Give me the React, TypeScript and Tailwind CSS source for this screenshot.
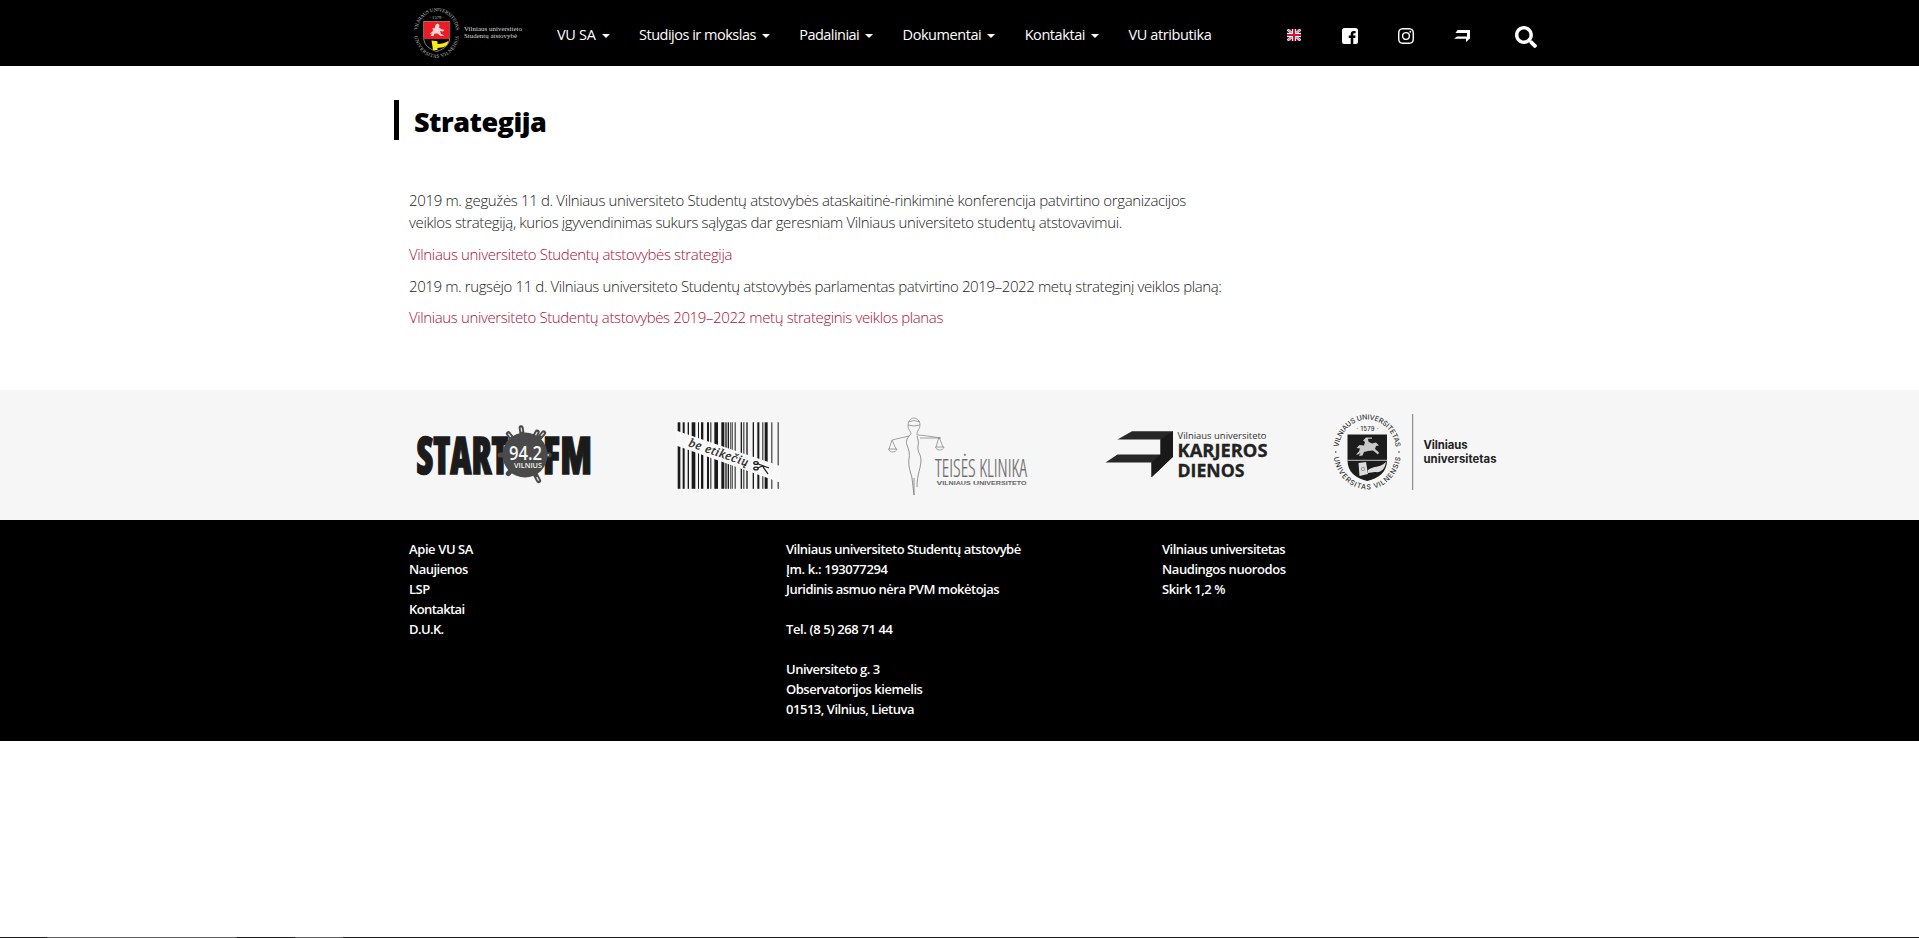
import { BsInstagram } from "react-icons/bs";
import { FaSearch } from "react-icons/fa";

const nav = [
  { label: "VU SA", menu: true, tracking: "tracking-[-0.3px]" },
  { label: "Studijos ir mokslas", menu: true, tracking: "tracking-[-0.49px]" },
  { label: "Padaliniai", menu: true, tracking: "tracking-[-0.55px]" },
  { label: "Dokumentai", menu: true, tracking: "tracking-[-0.44px]" },
  { label: "Kontaktai", menu: true, tracking: "tracking-[-0.42px]" },
  { label: "VU atributika", menu: false, tracking: "tracking-[-0.4px]" },
];

function HeaderLogo() {
  return (
    <svg className="ml-[409px] h-[66px] w-[117px] shrink-0" viewBox="409 0 117 66">
      <defs>
        <path id="hTop" d="M417.2 32.700 A19.5 21.400 0 1 1 456.2 32.700" />
        <path id="hBot" d="M414.2 32.700 A22.5 25 0 0 0 459.2 32.700" />
      </defs>
      <g fill="#c8c8c8" fontFamily="Liberation Serif, serif" fontSize="5">
        <text textAnchor="middle" textLength="59"><textPath href="#hTop" startOffset="50%">VILNIAUS UNIVERSITETAS</textPath></text>
        <text textAnchor="middle" textLength="67"><textPath href="#hBot" startOffset="50%">UNIVERSITAS VILNENSIS</textPath></text>
        <text x="436.7" y="18.8" textAnchor="middle" fontSize="4.6">· 1579 ·</text>
      </g>
      <path d="M423.7 21.500h26v16c0 7-5 11.500-13 14c-8-2.500-13-7-13-14z" fill="#000" stroke="#aaa" strokeWidth=".8" />
      <path d="M424 21.800h25.400v17.200h-25.400z" fill="#ec1c24" />
      <path d="M429.500 34l3.500-3-.5-3 2 .5 1-3.500 2-1.500 2 1.500-.5 2.500 2 1.500 3.500 1-1.500 1.500-3-.5 1 3 3.500 1.500-4 .5-3-2.500-3 0-1 2.500h-3l1.500-2.500z" fill="#f3d9d9" />
      <path d="M431.500 40.500l6 .8v2.700c4-.5 7.500-.8 11-3c-.5 3.500-3 6-7 6.600l-4 .3v2h-4.500z" fill="#f7ea1b" />
      <g fill="#dcdcdc" fontFamily="Liberation Serif, serif" fontSize="6.900">
        <text x="464" y="30.600" textLength="58">Vilniaus universiteto</text>
        <text x="464" y="38.400" textLength="53">Studentų atstovybė</text>
      </g>
    </svg>
  );
}

const spikes = [[-55, 20], [-38, 27], [-8, 27.5], [28, 26], [40, 29], [90, 24], [152, 29], [222, 25], [270, 25]];

function StartFm() {
  return (
    <svg className="h-[130px] w-[225px]" viewBox="409 390 225 130">
      <g fill="#1b1b1b" stroke="#1b1b1b" strokeWidth="1.500" fontFamily="Open Sans, sans-serif" fontStretch="75%" fontWeight="800">
        <text x="416.500" y="474" fontSize="50.500" textLength="92" lengthAdjust="spacingAndGlyphs">START</text>
        <text x="543" y="474" fontSize="50.500" textLength="49" lengthAdjust="spacingAndGlyphs">FM</text>
      </g>
      <g stroke="#4a4a4a" strokeWidth="5" strokeLinecap="round">
        {spikes.map(([a, r]) => <line key={a} x1="525" y1="455" x2="525" y2={455 - r} transform={`rotate(${a} 525 455)`} />)}
      </g>
      <g stroke="#e0e0e0" strokeWidth="1.300">
        {spikes.filter(([, r]) => r > 23 && r !== 25).map(([a, r]) => <line key={a} x1="525" y1={459 - r} x2="525" y2={455 - r} transform={`rotate(${a} 525 455)`} />)}
      </g>
      <circle cx="525" cy="455" r="22.500" fill="#4a4a4a" />
      <g fill="#f6f6f6" fontFamily="Open Sans, sans-serif">
        <text x="509" y="460" fontSize="19.500" fontWeight="600" textLength="33" lengthAdjust="spacingAndGlyphs">94.2</text>
        <text x="514" y="468" fontSize="6.200" fontWeight="600" textLength="28" lengthAdjust="spacingAndGlyphs">VILNIUS</text>
      </g>
    </svg>
  );
}

const bars = [[833, 8], [848, 6], [863, 4], [875, 11], [894, 3], [903, 7], [921, 6], [931, 3], [943, 11], [964, 9], [976, 4], [983, 4], [990, 2], [995, 3], [1004, 3], [1022, 4], [1030, 3], [1039, 4], [1058, 4], [1072, 6], [1087, 3], [1094, 9], [1114, 3], [1133, 3]];

function Barcode() {
  return (
    <svg className="h-[130px] w-[218px]" viewBox="634 390 218 130">
      {bars.map(([x, w]) => <rect key={x} x={400 + x / 3} y="422.300" width={w / 3} height="66.500" fill="#1a1a1a" />)}
      <path d="M676 430.500L780 466v16.500L676 445.500z" fill="#f8f8f8" />
      <text x="688" y="446" transform="rotate(19 688 446)" fill="#1a1a1a" fontFamily="Liberation Serif, serif" fontStyle="italic" fontSize="12.500" stroke="#1a1a1a" strokeWidth=".3" textLength="62">be etikečių</text>
      <g stroke="#1a1a1a" strokeWidth="1.300" fill="none">
        <path d="M757 463.500l12 4.500M757.500 468l5-2 5.500 8" />
        <ellipse cx="756" cy="463" rx="2.200" ry="1.400" /><ellipse cx="756" cy="468.500" rx="2.200" ry="1.400" />
      </g>
    </svg>
  );
}

function Clinic() {
  return (
    <svg className="h-[130px] w-[218px]" viewBox="852 390 218 130">
      <g fill="none" stroke="#8b8b8b" strokeWidth=".8">
        <path d="M908 426c0-5 3-8 6-8s6 3 6 7c0 4-3 6-3 8v2l7 .5 17 2.500M908 426c0 4 3 5 3 8l-2 2-17 4M908 422q6-3 12 0M908 425q6 2 12 0" />
        <path d="M892 440l-3 9M892 440l4 9M888.500 449h8.500c-1 4-7.500 4-8.500 0zM939 437l-3 10M939 437l4 10M935.500 447h8.500c-1 4-7.500 4-8.500 0z" />
        <path d="M920 438h20" />
        <path d="M909 436c-3 4-3 7-2 9c2 5 3 9 2 14c-1 8 2 14 3 19c1 6 1 11 2 17c0-7 0-12 0-17" stroke="#777" />
        <path d="M917 436c1 4 2 6 1 10c-1 6 3 8 3 14c0 8-4 14-4 27" stroke="#777" />
      </g>
      <text x="935" y="477" fill="#6c6c6c" fontFamily="Open Sans, sans-serif" fontStretch="75%" fontWeight="300" fontSize="26" stroke="#6c6c6c" strokeWidth=".2" textLength="92" lengthAdjust="spacingAndGlyphs">TEISĖS KLINIKA</text>
      <text x="936.500" y="484.600" fill="#666" fontFamily="Liberation Sans, sans-serif" fontSize="6" fontWeight="700" textLength="90" lengthAdjust="spacingAndGlyphs">V<tspan fontSize="5">ILNIAUS</tspan> U<tspan fontSize="5">NIVERSITETO</tspan></text>
    </svg>
  );
}

function Career() {
  return (
    <svg className="h-[130px] w-[230px]" viewBox="1070 390 230 130">
      <path d="M1132 431.300h41v25.500l-21.500 20.500v-14.800h-46l12-8h43v-15h-43z" fill="#272727" />
      <path d="M1173 431.300v25.500l-21.500 20.500v-14.800l9-8v-15z" fill="#191919" />
      <text x="1177.500" y="438.800" fill="#333" fontFamily="Open Sans, sans-serif" fontSize="9.200" fontWeight="500" textLength="89" lengthAdjust="spacingAndGlyphs">Vilniaus universiteto</text>
      <g fill="#222" fontFamily="Open Sans, sans-serif" fontWeight="700" fontSize="18.500" stroke="#222" strokeWidth=".3">
        <text x="1177.500" y="457" textLength="90" lengthAdjust="spacingAndGlyphs">KARJEROS</text>
        <text x="1177.500" y="476.800" textLength="67" lengthAdjust="spacingAndGlyphs">DIENOS</text>
      </g>
    </svg>
  );
}

function University() {
  return (
    <svg className="h-[130px] w-[210px]" viewBox="1300 390 210 130">
      <defs>
        <path id="uTop" d="M1338.400 451.700 A28.800 32.200 0 1 1 1396 451.700" />
        <path id="uBot" d="M1333.500 451.700 A33.700 37.700 0 0 0 1400.900 451.700" />
      </defs>
      <g fill="#333" fontFamily="Inter, sans-serif" fontSize="7" fontWeight="500">
        <text textAnchor="middle" textLength="87"><textPath href="#uTop" startOffset="50%">VILNIAUS UNIVERSITETAS</textPath></text>
        <text textAnchor="middle" textLength="101"><textPath href="#uBot" startOffset="50%">UNIVERSITAS VILNENSIS</textPath></text>
        <text x="1367.500" y="430.700" textAnchor="middle" fontSize="6" textLength="22">· 1579 ·</text>
      </g>
      <circle cx="1335.700" cy="452" r=".8" fill="#333" /><circle cx="1399" cy="452" r=".8" fill="#333" />
      <path d="M1347.500 434.500h39.500v26c0 11-8 18-19.800 20.500c-11.700-2.500-19.700-9.500-19.700-20.500z" fill="#1c1c1c" />
      <path d="M1347.500 460.300h39.500" stroke="#eee" strokeWidth=".8" />
      <path d="M1356 454.500l3-3 1-3-3.500-.5 3-3 4.500.5 1-3.500-2-1.500 3-3h6v1.200h-4l.5 3 3.500 1.800 4-1 3 3-3 .5-1 3 4 3.500-1 2-5-4-5 .5-4 1-1.500 3.500-3.500.5 1.500-3-2.500 1.500z" fill="#c9c9c9" />
      <path d="M1358.500 463l7.500-1 2 12-8.500 2zM1368 470c7-5 10-1 18-8c-1 7-5 11-11 10l-7 1z" fill="#ddd" />
      <circle cx="1363" cy="469" r="1.700" fill="none" stroke="#777" strokeWidth=".7" />
      <path d="M1412.700 414v76" stroke="#777" />
      <g fill="#222" fontFamily="Inter, sans-serif" fontWeight="700" fontSize="11.300">
        <text x="1423.500" y="448.800" textLength="44">Vilniaus</text>
        <text x="1423.500" y="462.800" textLength="73">universitetas</text>
      </g>
    </svg>
  );
}

export default function App() {
  return (
    <div className="flex h-[938px] flex-col whitespace-nowrap bg-white font-['Open_Sans',sans-serif] text-[#222]">
      <header className="flex h-[66px] shrink-0 bg-black text-white">
        <HeaderLogo />
        <nav className="ml-[31px] flex h-[70px] items-center gap-[29.4px] text-[14.5px]">
          {nav.map(({ label, menu, tracking }) => (
            <a key={label} className="flex items-center">
              <span className={tracking}>{label}</span>
              {menu && <i className="ml-1.5 mt-0.5 border-x-4 border-t-4 border-x-transparent" />}
            </a>
          ))}
        </nav>
        <div className="ml-[76px] flex h-[72px] items-center">
          <svg className="-mt-0.5 h-3 w-3.5" viewBox="0 0 14 12">
            <path d="M0 0h14v12H0z" fill="#26296b" />
            <path d="M0 0l14 12M14 0L0 12" stroke="#fff" strokeWidth="2.400" />
            <path d="M0 0l14 12M14 0L0 12" stroke="#cf1530" strokeWidth=".8" />
            <path d="M7 0v12M0 6h14" stroke="#fff" strokeWidth="4" />
            <path d="M7 0v12M0 6h14" stroke="#d3142f" strokeWidth="2.200" />
          </svg>
          <svg className="ml-[41px] size-4" viewBox="0 0 16 16">
            <rect width="16" height="16" rx="2.500" fill="#fff" />
            <path d="M8.700 16v-6H6.800V7.500h1.900V6c0-2 1.200-3 3-3h1.900v2.300h-1.200c-.9 0-1.100.4-1.100 1.100v1.100h2.300l-.3 2.500h-2v6z" fill="#000" />
          </svg>
          <BsInstagram className="ml-10" size={16} />
          <svg className="ml-10 size-4" viewBox="0 0 16 16"><path d="M3.500 2H16v8.500L12 14v-3.200H0l3-2.300h10V5H1.500z" fill="#fff" /></svg>
          <FaSearch className="ml-[45px] mt-0.5" size={22} />
        </div>
      </header>
      <main className="h-[324px] shrink-0 pl-[394px] pt-[34px]">
        <h1 className="flex h-10 items-center border-l-[5px] border-black pl-[15px] pt-1 text-[27px] font-extrabold tracking-[-0.5px] text-black">Strategija</h1>
        <div className="flex flex-col gap-[9.2px] pl-[15px] pt-[48.500px] text-[15px] font-light leading-[22.6px]">
          <p>
            <span className="tracking-[-0.349px]">2019 m. gegužės 11 d. Vilniaus universiteto Studentų atstovybės ataskaitinė-rinkiminė konferencija patvirtino organizacijos</span>
            <br />
            <span className="tracking-[-0.362px]">veiklos strategiją, kurios įgyvendinimas sukurs sąlygas dar geresniam Vilniaus universiteto studentų atstovavimui.</span>
          </p>
          <a className="tracking-[-0.361px] text-[#ab0d35]">Vilniaus universiteto Studentų atstovybės strategija</a>
          <p className="tracking-[-0.386px]">2019 m. rugsėjo 11 d. Vilniaus universiteto Studentų atstovybės parlamentas patvirtino 2019–2022 metų strateginį veiklos planą:</p>
          <a className="tracking-[-0.381px] text-[#ab0d35]">Vilniaus universiteto Studentų atstovybės 2019–2022 metų strateginis veiklos planas</a>
        </div>
      </main>
      <section className="flex h-[130px] shrink-0 bg-[#f6f6f6] pl-[409px]">
        <StartFm />
        <Barcode />
        <Clinic />
        <Career />
        <University />
      </section>
      <footer className="flex h-[221px] shrink-0 bg-black pl-[409px] pt-[19px] text-[13px] font-semibold leading-5 text-white">
        <div className="flex w-[377px] flex-col tracking-[-0.5px]">
          <a className="tracking-[-0.4px]">Apie VU SA</a>
          <a>Naujienos</a>
          <a>LSP</a>
          <a className="tracking-[-0.6px]">Kontaktai</a>
          <a className="tracking-[-0.6px]">D.U.K.</a>
        </div>
        <div className="flex w-[376px] flex-col tracking-[-0.5px]">
          <p>Vilniaus universiteto Studentų atstovybė</p>
          <p className="tracking-[-0.39px]">Įm. k.: 193077294</p>
          <p>Juridinis asmuo nėra PVM mokėtojas</p>
          <p className="mt-5 tracking-[-0.37px]">Tel. (8 5) 268 71 44</p>
          <p className="mt-5">Universiteto g. 3</p>
          <p>Observatorijos kiemelis</p>
          <p className="tracking-[-0.47px]">01513, Vilnius, Lietuva</p>
        </div>
        <div className="flex flex-col tracking-[-0.42px]">
          <a className="tracking-[-0.52px]">Vilniaus universitetas</a>
          <a>Naudingos nuorodos</a>
          <a>Skirk 1,2 %</a>
        </div>
      </footer>
      <div className="mt-auto flex h-px bg-[#1b1b1b]">
        <i className="ml-[47px] w-[190px] bg-[#5e5e5e]" />
        <i className="ml-[58px] w-12 bg-[#5e5e5e]" />
      </div>
    </div>
  );
}
